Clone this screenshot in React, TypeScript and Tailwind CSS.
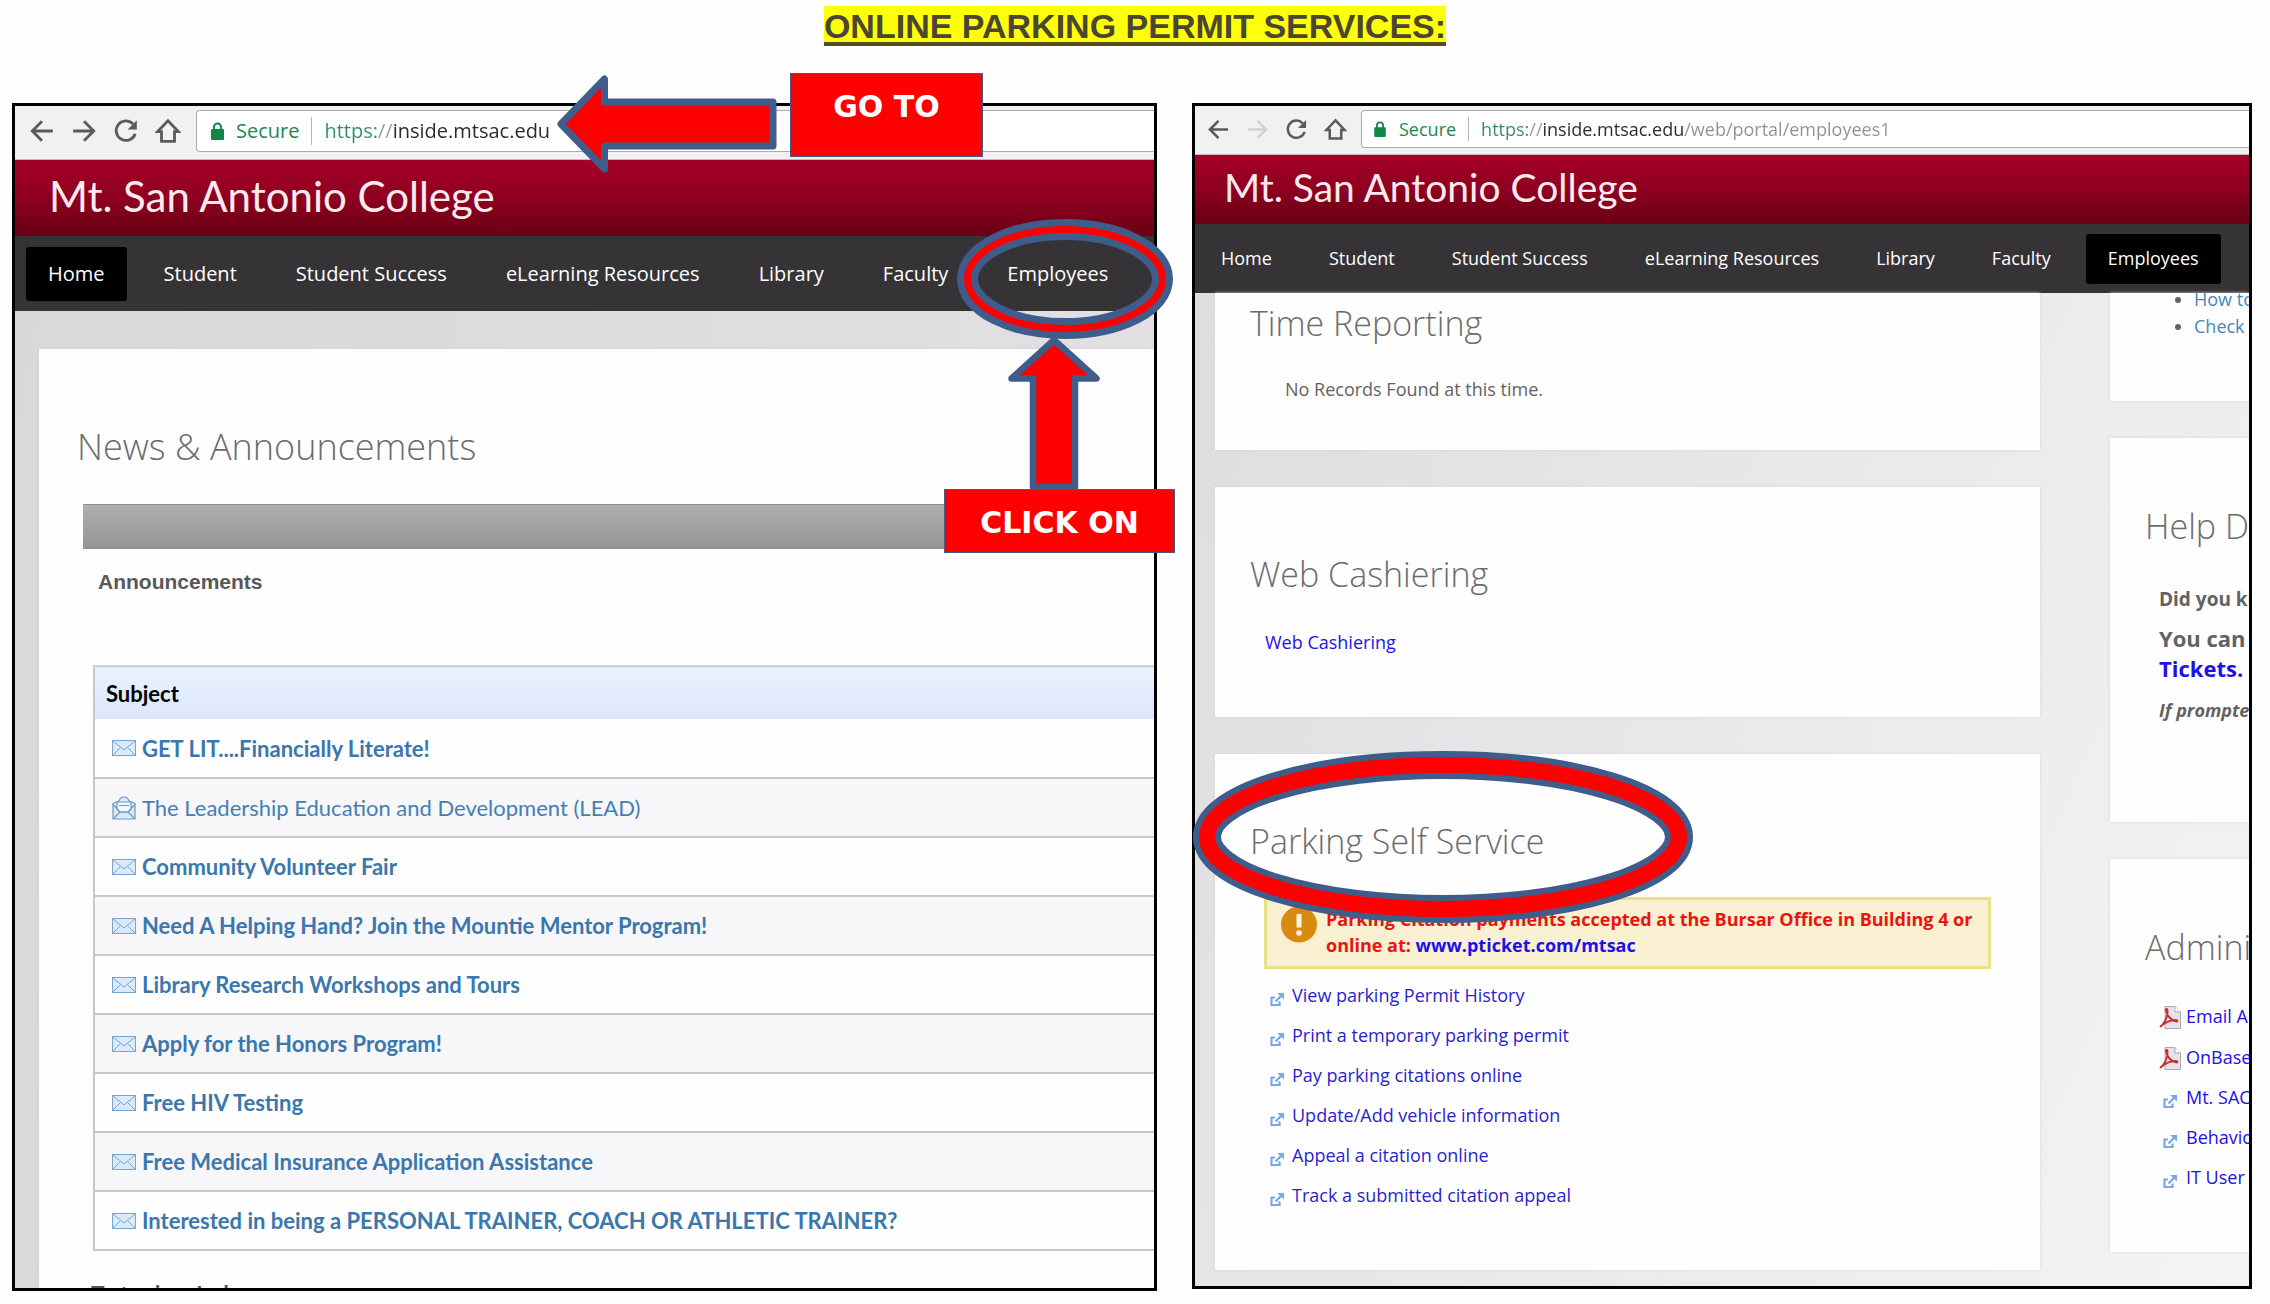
import type { ReactNode } from "react";

const NAV = [
	"Home",
	"Student",
	"Student Success",
	"eLearning Resources",
	"Library",
	"Faculty",
	"Employees",
];

const SUBJECTS = [
	{ title: "GET LIT....Financially Literate!", read: false },
	{ title: "The Leadership Education and Development (LEAD)", read: true },
	{ title: "Community Volunteer Fair", read: false },
	{ title: "Need A Helping Hand? Join the Mountie Mentor Program!", read: false },
	{ title: "Library Research Workshops and Tours", read: false },
	{ title: "Apply for the Honors Program!", read: false },
	{ title: "Free HIV Testing", read: false },
	{ title: "Free Medical Insurance Application Assistance", read: false },
	{
		title: "Interested in being a PERSONAL TRAINER, COACH OR ATHLETIC TRAINER?",
		read: false,
	},
];

const PARKING_LINKS = [
	"View parking Permit History",
	"Print a temporary parking permit",
	"Pay parking citations online",
	"Update/Add vehicle information",
	"Appeal a citation online",
	"Track a submitted citation appeal",
];

const ADMIN_LINKS = [
	{ label: "Email A", pdf: true },
	{ label: "OnBase", pdf: true },
	{ label: "Mt. SAC", pdf: false },
	{ label: "Behavio", pdf: false },
	{ label: "IT User", pdf: false },
];

export default function App() {
	return (
		<main className="min-h-screen bg-[#fefefe] pb-3 font-['Open_Sans',sans-serif]">
			<h1 className="h-[103px] pt-[6px] text-center font-['Liberation_Sans',Arial,sans-serif] text-[34px] font-bold leading-10 text-[#4b4632]">
				<span className="inline-block bg-[#ffff0a] underline decoration-[#524d1c] decoration-4 underline-offset-4 [text-decoration-skip-ink:none]">
					ONLINE PARKING PERMIT SERVICES:
				</span>
			</h1>
			<div className="grid grid-cols-[1145fr_1060fr] items-start gap-[35px] pl-3 pr-[18px]">
				<div className="relative min-w-0">
					<HomeWindow />
					<HomeCallouts />
				</div>
				<div className="relative min-w-0">
					<EmployeesWindow />
					<Ring
						className="absolute left-px top-[648px] h-[172px] w-[500px]"
						width={500}
						height={172}
						band={28}
						stroke={6}
					/>
				</div>
			</div>
		</main>
	);
}

function HomeWindow() {
	return (
		<section className="overflow-hidden border-[3px] border-black bg-[linear-gradient(100deg,#d9d7da,#e3e1e4)]">
			<div className="flex h-[54px] items-start border-b border-[#c9b9be] bg-[#f2f0f3] pl-[6px] pt-1">
				<ToolbarButtons className="h-[42px] w-[42px]" iconClass="h-[26px] w-[26px]" />
				<div className="ml-[7px] flex h-[42px] flex-1 items-center rounded-l border border-r-0 border-[#a9adac] bg-white pl-[14px] text-[20px] text-[#1d8650]">
					<LockIcon className="h-[18px] w-[13px]" />
					<span className="ml-3">Secure</span>
					<span className="mx-3 h-7 w-px bg-[#b5b5b5]" />
					<input
						aria-label="Address"
						readOnly
						defaultValue="https://inside.mtsac.edu"
						className="w-[260px] bg-[linear-gradient(to_right,#2f8f62_0_53px,#9a9a9a_53px_69px,#262833_69px)] bg-clip-text text-transparent outline-none"
					/>
				</div>
			</div>
			<header className="flex h-[76px] items-center bg-[linear-gradient(#a50027,#8e0020_50%,#690014)] pb-1 pl-[34px]">
				<p className="whitespace-nowrap font-[Lato,sans-serif] text-[42px] leading-none text-[#fdeaee]">
					Mt. San Antonio College
				</p>
			</header>
			<nav className="flex h-[75px] items-center gap-[15px] bg-[#353335] pl-[11px] text-[20px] text-white">
				{NAV.map((item) => (
					<NavLink key={item} className="h-[54px]" active={item === "Home"}>
						{item}
					</NavLink>
				))}
			</nav>
			<div className="ml-6 mt-[38px] bg-[#fefefe] shadow-[0_0_3px_#cfcdd0]">
				<h2 className="pl-[38px] pt-[74px] text-[36px] font-light leading-[48px] text-[#6c6c6e]">
					News &amp; Announcements
				</h2>
				<div className="ml-11 mt-[33px] h-[45px] border-y border-[#8f8d90] bg-[linear-gradient(#b0aeb1,#969496)]" />
				<h3 className="ml-[59px] mt-[19px] font-['Liberation_Sans',Arial,sans-serif] text-[21px] font-bold leading-7 text-[#585858]">
					Announcements
				</h3>
				<div className="ml-[54px] mt-[69px]">
					<table className="w-full border-collapse border-b-2 border-l-2 border-[#c8c8ca] text-left font-['Trebuchet_MS',Lato,sans-serif] text-[22px]">
						<thead>
							<tr className="h-[53px] border-t-2 border-[#ccd0d6] bg-[linear-gradient(#ebf2fe,#dbe6f9)]">
								<th className="pl-[11px] font-bold text-black">Subject</th>
							</tr>
						</thead>
						<tbody>
							{SUBJECTS.map((s) => (
								<tr
									key={s.title}
									className="h-[59px] border-b-2 border-[#c8c8ca] even:bg-[#f7f6f8]"
								>
									<td className="pl-[17px]">
										<a
											href="#"
											className={
												s.read
													? "flex items-center gap-[6px] text-[#447fb4]"
													: "flex items-center gap-[6px] font-bold text-[#3a77ad]"
											}
										>
											{s.read ? <OpenEnvelope /> : <Envelope />}
											{s.title}
										</a>
									</td>
								</tr>
							))}
						</tbody>
					</table>
				</div>
				<h3 className="ml-[52px] mt-[29px] h-2 overflow-hidden text-[24px] font-semibold leading-7 text-[#555]">
					Tutoring Lab
				</h3>
			</div>
		</section>
	);
}

function EmployeesWindow() {
	return (
		<section className="overflow-hidden border-[3px] border-black bg-[linear-gradient(115deg,#dddbde,#ebe9ec_55%,#f5f3f6)]">
			<div className="flex h-[49px] items-start border-b border-[#c9b9be] bg-[#f2f0f3] pl-[4px] pt-1">
				<ToolbarButtons
					className="h-[38px] w-[39px]"
					iconClass="h-[23px] w-[23px]"
					forwardDisabled
				/>
				<div className="ml-[6px] flex h-[38px] flex-1 items-center rounded-l border border-r-0 border-[#a9adac] bg-white pl-3 text-[18px] text-[#1d8650]">
					<LockIcon className="h-4 w-3" />
					<span className="ml-[13px]">Secure</span>
					<span className="mx-3 h-6 w-px bg-[#b5b5b5]" />
					<input
						aria-label="Address"
						readOnly
						defaultValue="https://inside.mtsac.edu/web/portal/employees1"
						className="w-[480px] bg-[linear-gradient(to_right,#2f8f62_0_48px,#9a9a9a_48px_62px,#262833_62px_204px,#919191_204px)] bg-clip-text text-transparent outline-none"
					/>
				</div>
			</div>
			<header className="flex h-[69px] items-center bg-[linear-gradient(#a50027,#8e0020_50%,#690014)] pb-1 pl-[29px]">
				<p className="whitespace-nowrap font-[Lato,sans-serif] text-[39px] leading-none text-[#fdeaee]">
					Mt. San Antonio College
				</p>
			</header>
			<nav className="flex h-[69px] items-center gap-[13px] bg-[#353335] pl-1 text-[18px] text-white">
				{NAV.map((item) => (
					<NavLink key={item} className="h-[50px]" active={item === "Employees"}>
						{item}
					</NavLink>
				))}
			</nav>
			<div className="grid grid-cols-[825fr_139fr] items-start gap-[70px] pb-4 pl-5 text-[18px] leading-[26px] text-[#626264]">
				<div className="flex min-w-0 flex-col gap-[37px]">
					<Card className="pb-12 pt-2">
						<CardTitle>Time Reporting</CardTitle>
						<p className="ml-[70px] mt-[31px]">No Records Found at this time.</p>
					</Card>
					<Card className="pb-[62px] pt-[65px]">
						<CardTitle>Web Cashiering</CardTitle>
						<p className="ml-[50px] mt-[33px]">
							<a href="#" className="text-[#1c12e6]">
								Web Cashiering
							</a>
						</p>
					</Card>
					<Card className="pb-[62px] pt-[65px]">
						<CardTitle>Parking Self Service</CardTitle>
						<div className="mx-[49px] mt-[34px] flex border-[3px] border-[#e9e283] bg-[#f8f0d1] pb-2 pl-[14px] pt-[6px] font-bold text-[#e8150f]">
							<AlertIcon />
							<p className="ml-[9px]">
								Parking Citation payments accepted at the Bursar Office in Building 4 or
								<br />
								online at:{" "}
								<a href="#" className="text-[#1c12e6]">
									www.pticket.com/mtsac
								</a>
							</p>
						</div>
						<ul className="ml-[55px] mt-[13px] flex flex-col gap-[14px]">
							{PARKING_LINKS.map((label) => (
								<li key={label}>
									<a href="#" className="flex items-center text-[#2a1fd0]">
										<ExternalIcon />
										<span className="ml-2">{label}</span>
									</a>
								</li>
							))}
						</ul>
					</Card>
				</div>
				<div className="flex min-w-0 flex-col gap-[37px] whitespace-nowrap">
					<Card className="pb-[61px]">
						<ul className="-mt-[7px] list-disc pl-[84px] leading-[27px]">
							<li>
								<a href="#" className="text-[#4487bd]">
									How to
								</a>
							</li>
							<li>
								<a href="#" className="text-[#4487bd]">
									Check
								</a>
							</li>
						</ul>
					</Card>
					<Card className="pb-[99px] pt-[66px]">
						<CardTitle>Help Desk</CardTitle>
						<div className="ml-[49px] mt-[37px] font-bold">
							<p className="text-[19px] leading-7">Did you know</p>
							<p className="mt-[10px] text-[22px] leading-[30px]">
								You can
								<br />
								<a href="#" className="text-[#1c12e6]">
									Tickets.
								</a>
							</p>
							<p className="mt-[14px] italic">If prompted</p>
						</div>
					</Card>
					<Card className="pb-[62px] pt-[66px]">
						<CardTitle>Administrative</CardTitle>
						<ul className="ml-[49px] mt-[33px] flex flex-col gap-[14px]">
							{ADMIN_LINKS.map((link) => (
								<li key={link.label}>
									<a href="#" className="flex items-center text-[#1c12e6]">
										<span className="flex w-[27px] shrink-0">
											{link.pdf ? (
												<PdfIcon />
											) : (
												<span className="pl-1">
													<ExternalIcon />
												</span>
											)}
										</span>
										{link.label}
									</a>
								</li>
							))}
						</ul>
					</Card>
				</div>
			</div>
		</section>
	);
}

// Red arrows, labels and the ring drawn on top of the home window.
function HomeCallouts() {
	return (
		<>
			<svg
				className="absolute left-[544px] -top-7 h-[98px] w-[221px]"
				viewBox="0 0 221 98"
				aria-hidden="true"
			>
				<path
					d="M5 49 48.500 4V27H217V71H48.500V94Z"
					fill="#fe0000"
					stroke="#3f5d8b"
					strokeWidth="7"
					strokeLinejoin="round"
				/>
			</svg>
			<Callout className="left-[778px] -top-[30px] h-[84px] w-[193px]">GO TO</Callout>
			<svg
				className="absolute left-[995px] top-[232px] h-[155px] w-[94px]"
				viewBox="0 0 94 155"
				aria-hidden="true"
			>
				<path
					d="M47 5 89.500 43.500H68V152H26V43.500H4.500Z"
					fill="#fe0000"
					stroke="#3f5d8b"
					strokeWidth="6.500"
					strokeLinejoin="round"
				/>
			</svg>
			<Ring
				className="absolute left-[945px] top-[116px] h-[120px] w-[216px]"
				width={216}
				height={120}
				band={21}
				stroke={7}
			/>
			<Callout className="left-[932px] top-[386px] h-16 w-[231px]">CLICK ON</Callout>
		</>
	);
}

function Callout({ className, children }: { className: string; children: ReactNode }) {
	return (
		<p
			className={`absolute border border-[#3f5d8b] bg-[#fe0000] pt-[15px] text-center font-['DejaVu_Sans',sans-serif] text-[30px] font-black leading-9 text-white ${className}`}
		>
			{children}
		</p>
	);
}

function Ring({
	className,
	width,
	height,
	band,
	stroke,
}: { className: string; width: number; height: number; band: number; stroke: number }) {
	const cx = width / 2;
	const cy = height / 2;
	return (
		<svg className={className} viewBox={`0 0 ${width} ${height}`} fill="none" aria-hidden="true">
			<ellipse
				cx={cx}
				cy={cy}
				rx={cx - band / 2}
				ry={cy - band / 2}
				stroke="#3f5d8b"
				strokeWidth={band}
			/>
			<ellipse
				cx={cx}
				cy={cy}
				rx={cx - band / 2}
				ry={cy - band / 2}
				stroke="#fe0000"
				strokeWidth={band - stroke * 2}
			/>
		</svg>
	);
}

function Card({ className, children }: { className: string; children: ReactNode }) {
	return (
		<article className={`overflow-hidden bg-[#fefefe] shadow-[0_0_3px_#d6d4d7] ${className}`}>
			{children}
		</article>
	);
}

function CardTitle({ children }: { children: ReactNode }) {
	return (
		<h2 className="pl-[35px] text-[34px] font-light leading-[44px] text-[#6c6c6e]">{children}</h2>
	);
}

function NavLink({
	active,
	className,
	children,
}: { active: boolean; className: string; children: ReactNode }) {
	return (
		<a
			href="#"
			className={`flex shrink-0 items-center rounded-[3px] px-[22px] ${active ? "bg-black" : ""} ${className}`}
		>
			{children}
		</a>
	);
}

function ToolbarButtons({
	className,
	iconClass,
	forwardDisabled = false,
}: { className: string; iconClass: string; forwardDisabled?: boolean }) {
	const button = `flex items-center justify-center text-[#5b5a5c] disabled:text-[#d3d1d4] ${className}`;
	const icon = {
		className: iconClass,
		viewBox: "0 0 24 24",
		fill: "none",
		stroke: "currentColor",
		strokeWidth: 2.6,
	};
	return (
		<>
			<button type="button" aria-label="Back" className={button}>
				<svg {...icon}>
					<path d="M22 12H3.500M12 3 3 12l9 9" />
				</svg>
			</button>
			<button type="button" aria-label="Forward" className={button} disabled={forwardDisabled}>
				<svg {...icon}>
					<path d="M2 12h18.500M12 3l9 9-9 9" />
				</svg>
			</button>
			<button type="button" aria-label="Reload" className={button}>
				<svg {...icon}>
					<path d="M20.500 14.500A9 9 0 1 1 18.500 5.500" />
					<path d="M22 2v8.500h-8.500Z" fill="currentColor" stroke="none" />
				</svg>
			</button>
			<button type="button" aria-label="Home" className={button}>
				<svg {...icon}>
					<path d="M12 2.500 2.500 12.500H6V21.500H18V12.500H21.500Z" />
				</svg>
			</button>
		</>
	);
}

function LockIcon({ className }: { className: string }) {
	return (
		<svg className={className} viewBox="0 0 13 18" aria-hidden="true">
			<path d="M3 8V5a3.500 3.500 0 0 1 7 0v3" fill="none" stroke="#128744" strokeWidth="2" />
			<rect y="7" width="13" height="11" rx="1" fill="#128744" />
		</svg>
	);
}

function Envelope() {
	return (
		<svg className="h-4 w-6" viewBox="0 0 24 16" fill="none" stroke="#7ba3d0" aria-hidden="true">
			<rect x=".5" y=".5" width="23" height="15" fill="#dbeafa" />
			<path d="m1 1 11 9L23 1M1 15l7.500-7.500M23 15l-7.500-7.500" />
		</svg>
	);
}

function OpenEnvelope() {
	return (
		<svg
			className="-my-1 h-6 w-6"
			viewBox="0 0 24 24"
			fill="none"
			stroke="#6f97c6"
			strokeWidth="1.200"
			aria-hidden="true"
		>
			<path d="M1 7.500 7 5C8 2 10 1 12 1s4 1 5 4l6 2.500V23H1Z" fill="#dbeafa" />
			<path d="M5 13V6h14v7l-3 3H8Z" fill="#f4f9ff" />
			<path d="M1 8.500 8 16h8l7-7.500M1 23l7-7M23 23l-7-7M7 9.500h10" />
		</svg>
	);
}

function AlertIcon() {
	return (
		<svg className="h-[37px] w-9 shrink-0" viewBox="0 0 36 37" aria-hidden="true">
			<circle cx="18" cy="18.500" r="18" fill="#d98a10" />
			<path d="M15.500 8h5v13.500h-5Z" fill="#fdf6e0" />
			<circle cx="18" cy="27" r="2.800" fill="#fdf6e0" />
		</svg>
	);
}

function ExternalIcon() {
	return (
		<svg
			className="mt-2 h-[13px] w-[14px]"
			viewBox="0 0 14 13"
			fill="none"
			stroke="#78a9e0"
			strokeWidth="2.200"
			aria-hidden="true"
		>
			<path d="M5 4.500H1.500V12H9.500V8.500M5.500 8.500 11.500 2.500" />
			<path d="M7 0H14V6.500Z" fill="#78a9e0" stroke="none" />
		</svg>
	);
}

function PdfIcon() {
	return (
		<svg className="mt-1 h-[23px] w-[22px]" viewBox="0 0 22 23" fill="none" aria-hidden="true">
			<path d="M6 .5h10L21.500 6v16.500H6Z" fill="#e3e3ea" stroke="#a9a9b2" />
			<path d="M16 .5V6h5.500" fill="#fff" stroke="#a9a9b2" />
			<path
				d="M1 21C5 18 9 11 8.500 4.500c0-2-2-2-1.500 0C8 9.500 12 14.500 17.500 15.500c1.500 0 1-1.500-1-1.500-5 0-10 2-15 6.500"
				stroke="#c9302c"
				strokeWidth="1.900"
			/>
		</svg>
	);
}
